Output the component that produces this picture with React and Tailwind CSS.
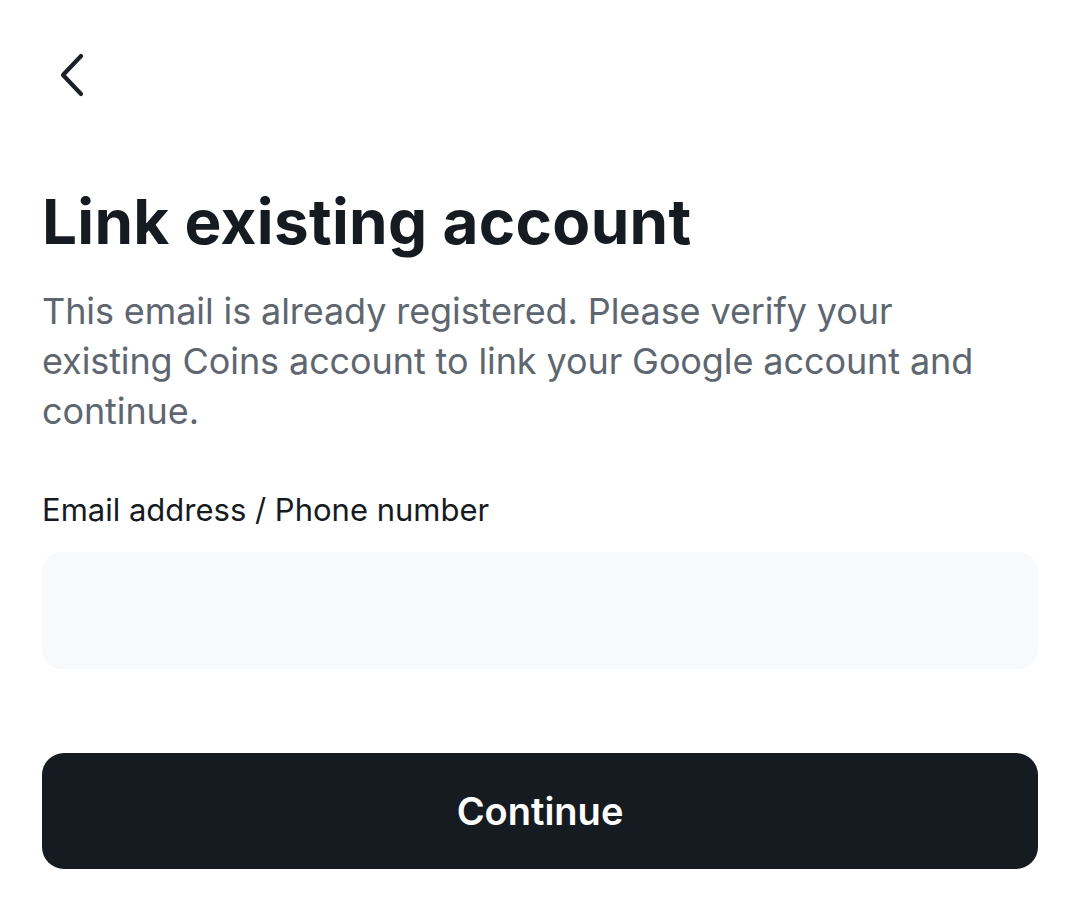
export default function App() {
  return (
    <div className="min-h-[915px] w-[1080px] bg-white px-[42px]" style={{ fontFamily: "Inter, 'Noto Sans', sans-serif" }}>
      <div className="pt-[52px] h-[182px]">
        <button className="ml-[14px] flex h-[46px] w-[34px] items-center">
          <svg width="30" height="46" viewBox="0 0 30 46" fill="none">
            <path d="M25 4 L7 23 L25 42" stroke="#1c2028" strokeWidth="4.2" strokeLinecap="round" strokeLinejoin="round" />
          </svg>
        </button>
      </div>
      <h1 className="text-[62px] font-bold leading-[80px] tracking-[0.3px] text-[#161b22]">Link existing account</h1>
      <p className="mt-[24px] w-[960px] text-[36px] leading-[50px] tracking-[-0.1px] text-[#5e6670]">
        This email is already registered. Please verify your existing Coins account to link your Google account and continue.
      </p>
      <div className="mt-[54px] text-[31px] leading-[40px] tracking-[0px] text-[#161b22]">Email address / Phone number</div>
      <div className="mt-[22px] h-[117px] w-[996px] rounded-[20px] bg-[#f8f9fa]" />
      <button className="mt-[84px] flex h-[116px] w-[996px] items-center justify-center rounded-[22px] bg-[#161b22] text-[38px] font-semibold tracking-[0px] text-white">
        Continue
      </button>
    </div>
  );
}
